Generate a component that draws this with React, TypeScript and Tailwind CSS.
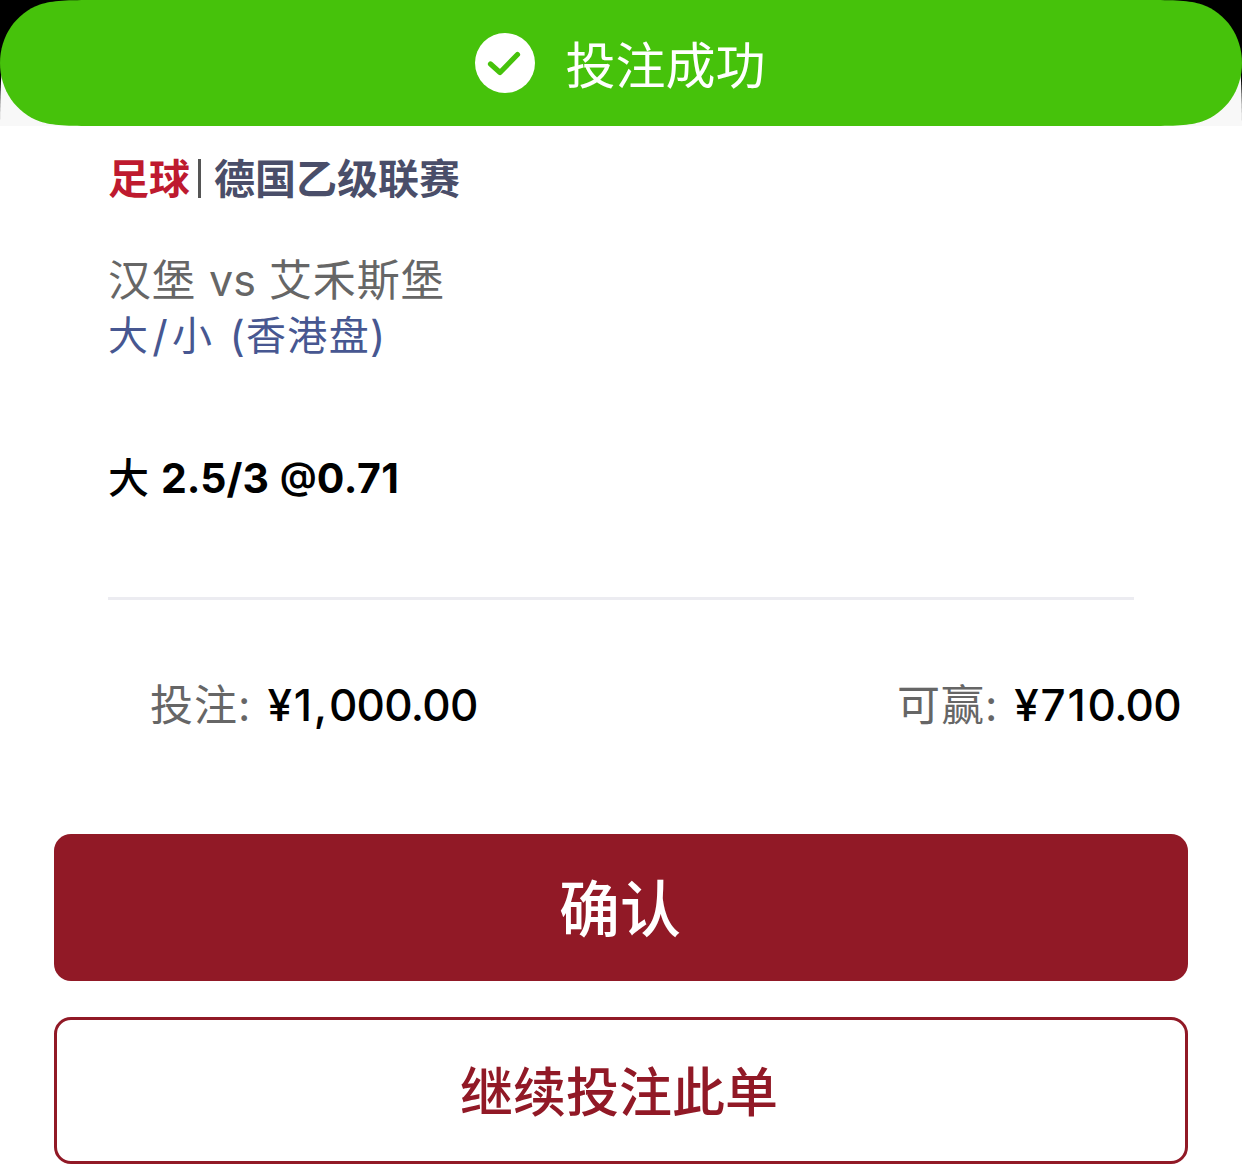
import React from 'react';

const bet = {
  sport: '足球',
  league: '德国乙级联赛',
  match: { home: '汉堡', away: '艾禾斯堡' },
};

const Toast = () => (
  <div className="relative h-[126px] bg-black">
    {/* Sheet edge behind the toast */}
    <div className="absolute inset-x-0 bottom-0 h-[60px] rounded-t-[3px_60px] bg-[#f8f8f8]" />
    <svg className="absolute inset-0" width="1242" height="126" viewBox="0 0 1242 126">
      <path
        d="M96 0H1146C1174 0 1190 0.5 1202 4.5C1226 13 1242 36 1242 63C1242 90 1226 113 1202 121.5C1190 125.5 1174 126 1146 126H96C68 126 52 125.5 40 121.5C16 113 0 90 0 63C0 36 16 13 40 4.5C52 0.5 68 0 96 0Z"
        fill="#46c20b"
      />
    </svg>
    <div className="relative flex h-full items-center justify-center gap-[31px] pr-[2px] text-white">
      <svg width="60" height="60" viewBox="0 0 60 60" fill="none">
        <circle cx="30" cy="30" r="30" fill="currentColor" />
        <path d="M15.5 31L25 39.5L42.5 21.5" stroke="#46c20b" strokeWidth="5.2" strokeLinecap="round" strokeLinejoin="round" />
      </svg>
      <span className="pt-[6px] text-[50px] leading-[60px]">投注成功</span>
    </div>
  </div>
);

const Amount = ({ label, head, tail }: { label: string; head: string; tail: string }) => (
  <div className="flex items-baseline leading-[60px]">
    <span className="mr-[16px] text-[43px] tracking-[1px] text-[#666666]">{label}:</span>
    <span className="text-[44px] font-medium text-black">
      <span className="tracking-[1.8px]">{head}</span>
      <span className="tracking-[-0.7px]">{tail}</span>
    </span>
  </div>
);

export default function App() {
  return (
    <div className="flex h-[1176px] w-[1242px] flex-col overflow-hidden bg-white font-['Inter','Noto_Sans_CJK_SC',sans-serif]">
      <Toast />

      {/* Bet details */}
      <section className="mx-[108px] flex h-[474px] flex-col border-b-[3px] border-[#ececf1] pt-[24px]">
        <div className="flex h-[60px] items-center text-[41px] font-bold">
          <span className="text-[#be1a2f]">{bet.sport}</span>
          <span className="mr-[13px] mb-[3px] ml-[8px] h-[39px] w-[3px] bg-[#555555]" />
          <span className="text-[#4a4e69]">{bet.league}</span>
        </div>
        <div className="mt-[42px] flex h-[56px] gap-[13px] text-[43px] leading-[57px] tracking-[1px] text-[#666666]">
          <span>{bet.match.home}</span>
          <span className="tracking-normal">vs</span>
          <span>{bet.match.away}</span>
        </div>
        <div className="flex h-[56px] text-[40px] leading-[56px] tracking-[1.3px] text-[#475791]">
          <span>大</span>
          <span className="mx-[3px] text-[43px]">/</span>
          <span className="mr-[16px]">小</span>
          <span className="text-[42px]">(</span>
          <span>香港盘</span>
          <span className="text-[42px]">)</span>
        </div>
        <div className="mt-[84px] flex text-[41px] leading-[60px] font-bold text-black">
          <span className="mr-[12px] font-medium">大</span>
          <span className="mr-[11px]">2.5/3</span>
          <span className="-mt-[2px] text-[37px] font-semibold">@</span>
          <span className="tracking-[0.5px]">0.71</span>
        </div>
      </section>

      {/* Stake and possible win */}
      <section className="mt-[75px] flex justify-between pr-[61px] pl-[150px]">
        <Amount label="投注" head="¥1," tail="000.00" />
        <Amount label="可赢" head="¥71" tail="0.00" />
      </section>

      <div className="mt-auto mb-[12px] flex flex-col gap-9 px-[54px]">
        <button className="h-[147px] rounded-[17px] bg-[#911926] pt-[7px] pr-[2px] text-[61px] font-medium text-white">
          确认
        </button>
        <button className="h-[147px] rounded-[17px] border-[3px] border-[#911926] pt-[7px] pr-[4px] text-[53px] font-medium text-[#911926]">
          继续投注此单
        </button>
      </div>
    </div>
  );
}
